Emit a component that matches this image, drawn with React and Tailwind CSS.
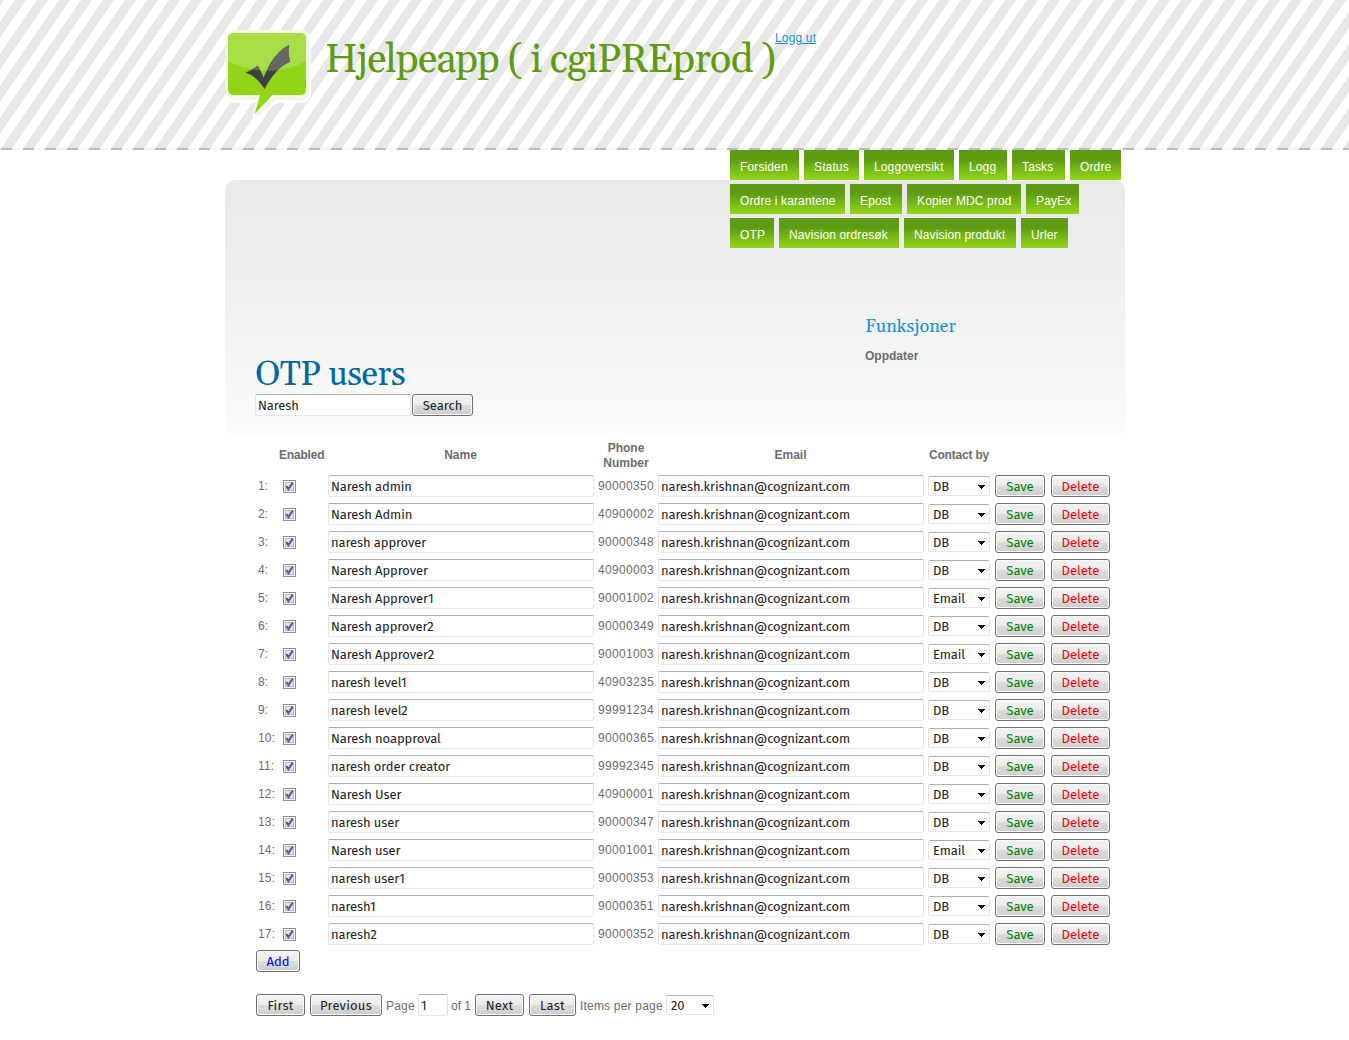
import React from "react";

const NAV = [
  [["Forsiden", "w-[69px]"], ["Status", "w-[55px]"], ["Loggoversikt", "w-[90px]"], ["Logg", "w-[48px]"], ["Tasks", "w-[53px]"], ["Ordre", "w-[51px]"]],
  [["Ordre i karantene", "w-[115px]"], ["Epost", "w-[52px]"], ["Kopier MDC prod", "w-[114px]"], ["PayEx", "w-[53px]"]],
  [["OTP", "w-[44px]"], ["Navision ordresøk", "w-[120px]"], ["Navision produkt", "w-[112px]"], ["Urler", "w-[47px]"]],
];

const EMAIL = "naresh.krishnan@cognizant.com";

const USERS = [
  ["Naresh admin", "90000350", "DB"],
  ["Naresh Admin", "40900002", "DB"],
  ["naresh approver", "90000348", "DB"],
  ["Naresh Approver", "40900003", "DB"],
  ["Naresh Approver1", "90001002", "Email"],
  ["Naresh approver2", "90000349", "DB"],
  ["Naresh Approver2", "90001003", "Email"],
  ["naresh level1", "40903235", "DB"],
  ["naresh level2", "99991234", "DB"],
  ["Naresh noapproval", "90000365", "DB"],
  ["naresh order creator", "99992345", "DB"],
  ["Naresh User", "40900001", "DB"],
  ["naresh user", "90000347", "DB"],
  ["Naresh user", "90001001", "Email"],
  ["naresh user1", "90000353", "DB"],
  ["naresh1", "90000351", "DB"],
  ["naresh2", "90000352", "DB"],
];

const COLS = "grid grid-cols-[21px_49px_270px_60px_270px_67px_56px_59px]";

function Button({ children, className }) {
  return (
    <button
      type="button"
      className={`flex h-[22px] items-center justify-center rounded-[3px] border border-[#707070] bg-[linear-gradient(#f3f3f3,#ebebeb_50%,#dddddd_50%,#cdcdcd)] pt-[2px] font-['Fira_Sans','Noto_Sans',sans-serif] text-[13px] leading-[18px] shadow-[inset_0_0_0_1px_#fafafa] ${className}`}
    >
      {children}
    </button>
  );
}

function Field({ value, className }) {
  return (
    <input
      readOnly
      value={value}
      className={`block h-[22px] rounded-[2px] border border-t-[#abadb3] border-r-[#e2e3ea] border-b-[#e3e9ef] border-l-[#e2e3ea] bg-white px-[2px] font-['Fira_Sans','Noto_Sans',sans-serif] text-[13px] tracking-[-0.1px] text-[#222222] outline-none ${className}`}
    />
  );
}

function Select({ value, className }) {
  return (
    <div
      className={`flex h-[20px] items-center justify-between rounded-[2px] border border-t-[#abadb3] border-r-[#e2e3ea] border-b-[#e3e9ef] border-l-[#e2e3ea] bg-white px-1 font-['Fira_Sans','Noto_Sans',sans-serif] text-[13px] leading-[16px] tracking-[-0.1px] text-[#222222] ${className}`}
    >
      <span className="pt-[2px]">{value}</span>
      <svg width="7" height="4" viewBox="0 0 7 4" shapeRendering="crispEdges" className="mt-px">
        <path d="M0 0h7v1H6v1H5v1H4v1H3V3H2V2H1V1H0z" fill="#000" />
      </svg>
    </div>
  );
}

function Checkbox() {
  return (
    <svg width="13" height="13" viewBox="0 0 13 13">
      <rect x=".5" y=".5" width="12" height="12" fill="#f4f4f4" stroke="#8e8f8f" />
      <rect x="2.5" y="2.5" width="8" height="8" fill="#e1e4e8" stroke="#b5bac2" />
      <path d="M3.4 6 L5.4 9 L9.6 2.8" fill="none" stroke="#4a5f97" strokeWidth="2.1" />
    </svg>
  );
}

function Logo() {
  const check = "M22.300 44.700Q29 42 34.700 37.700Q38 43 40.700 49.500C46 36 54 23 66 17Q64.500 25 67 33.700C57 38 49 47 41.600 61C36 53 31 47 22.300 44.700Z";
  return (
    <svg width="92" height="92" viewBox="0 0 92 92" className="block">
      <defs>
        <clipPath id="bubble">
          <rect x="5" y="5" width="78" height="62" rx="5.500" />
        </clipPath>
        <clipPath id="shine">
          <path d="M0 0H92V30L83 33.500Q44 52 5 33.500L0 30Z" />
        </clipPath>
      </defs>
      <path d="M11 3H80a8 8 0 0 1 8 8V66a9 9 0 0 1-9 9H54L34 89H29L33 75H12a9 9 0 0 1-9-8V11Z" fill="#fff" />
      <path d="M12 3H77a8 8 0 0 1 8 8V62a8 8 0 0 1-8 8H52L31 89L37 70H11a8 8 0 0 1-8-8V11a8 8 0 0 1 8-8Z" fill="#e3e6df" transform="translate(1.2 1.500)" opacity=".55" />
      <path d="M11 2H77.500a8 8 0 0 1 8 8V62a8 8 0 0 1-8 8H52L31 88.500L29.500 86L35.500 70H10.500a8 8 0 0 1-8-8V10a8 8 0 0 1 8-8Z" fill="#f1fde0" />
      <path d="M37.500 66H50.500L31.500 86Z" fill="#92d41a" />
      <g clipPath="url(#bubble)">
        <rect x="5" y="5" width="78" height="62" fill="#92d41a" />
        <path d="M5 5H83V33.500Q44 52 5 33.500Z" fill="#a8dd47" />
      </g>
      <path d={check} fill="#404040" />
      <path clipPath="url(#shine)" d={check} fill="#666666" />
    </svg>
  );
}

export default function App() {
  return (
    <div className="min-h-[1040px] w-full bg-white font-['Liberation_Sans',Arial,sans-serif] text-[12px] text-[#6d6d6d]">
      <header className="flex h-[150px] flex-col bg-[repeating-linear-gradient(124.51deg,#e8e8e8_0px,#e8e8e8_3.2px,#ffffff_3.5px,#ffffff_12.2px,#e8e8e8_12.5px,#e8e8e8_18.129px)]">
        <div className="flex h-[148px] items-start pt-[28px] pl-[223px]">
          <Logo />
          <h1 className="ml-[10px] pt-[9px] font-['Gelasio',Georgia,'Liberation_Serif',serif] text-[40px] leading-[48px] font-normal tracking-[-1px] whitespace-nowrap text-[#5c9b12]">
            Hjelpeapp ( i cgiPREprod )
          </h1>
          <a className="pt-[2px] leading-[16px] tracking-[0.15px] text-[#1490dd] underline">Logg ut</a>
        </div>
        <div className="h-[2px] bg-[repeating-linear-gradient(90deg,#f5f5f5_0px,#f5f5f5_1px,#bcbcbc_1px,#bcbcbc_12px,#f5f5f5_12px,#f5f5f5_22px)]" />
      </header>

      <main className="ml-[225px] w-[900px] pt-[30px]">
        <section className="flow-root h-[256px] rounded-[10px] bg-linear-to-b from-[#e8e8e8] to-[#fbfbfb]">
          <nav className="-mt-[30px] ml-[505px] flex flex-col gap-1">
            {NAV.map((row, i) => (
              <div key={i} className="flex gap-[5px]">
                {row.map(([label, width]) => (
                  <a
                    key={label}
                    className={`h-[30px] bg-[linear-gradient(#5c9b12_0%,#5c9b12_30%,#93d61a_100%)] pt-[2px] pl-[10px] leading-[30px] tracking-[0.13px] whitespace-nowrap text-white ${width}`}
                  >
                    {label}
                  </a>
                ))}
              </div>
            ))}
          </nav>
          <div className="flex pt-[67px]">
            <div className="w-[640px] pt-[40px] pl-[30px]">
              <h2 className="pt-[1px] font-['Gelasio',Georgia,'Liberation_Serif',serif] text-[34px] leading-[38px] font-normal tracking-[-0.5px] text-[#0069a5]">
                OTP users
              </h2>
              <div className="flex gap-[1px]">
                <Field value="Naresh" className="w-[156px]" />
                <Button className="w-[61px] text-[#222222]">Search</Button>
              </div>
            </div>
            <aside>
              <h3 className="font-['Gelasio',Georgia,'Liberation_Serif',serif] text-[18px] leading-[24px] font-normal text-[#1490dd]">
                Funksjoner
              </h3>
              <p className="mt-[10px] leading-[14px] font-bold">Oppdater</p>
            </aside>
          </div>
        </section>

        <section className="pl-[33px]">
          <div className={`${COLS} h-[36px] items-center pt-[3px] text-center leading-[15px] font-bold tracking-[-0.2px]`}>
            <span />
            <span className="text-left">Enabled</span>
            <span className="pr-[5px] tracking-normal">Name</span>
            <span className="pr-[4px] tracking-normal">Phone Number</span>
            <span className="pr-[5px] tracking-normal">Email</span>
            <span className="pl-[1px] text-left whitespace-nowrap">Contact by</span>
          </div>
          {USERS.map(([name, phone, contact], i) => (
            <div key={i} className={`${COLS} h-[28px] items-center`}>
              <span className="tracking-[0.15px]">{i + 1}:</span>
              <span className="pt-[1px] pl-[4px]">
                <Checkbox />
              </span>
              <Field value={name} className="w-[266px]" />
              <span className="tracking-[0.33px]">{phone}</span>
              <Field value={EMAIL} className="w-[266px]" />
              <Select value={contact} className="w-[62px]" />
              <Button className="w-[50px] text-[#008000]">Save</Button>
              <Button className="w-[59px] text-[#ff0000]">Delete</Button>
            </div>
          ))}
        </section>

        <section className="pt-[2px] pl-[31px]">
          <Button className="w-[44px] text-[#0000ff]">Add</Button>
          <div className="mt-[22px] flex items-center tracking-[0.2px]">
            <Button className="w-[49px] text-[#222222]">First</Button>
            <Button className="ml-[5px] w-[72px] text-[#222222]">Previous</Button>
            <span className="ml-1 w-[32px] pt-[1px]">Page</span>
            <Field value="1" className="w-[30px]" />
            <span className="ml-[3px] w-[24px] pt-[1px] tracking-normal whitespace-nowrap">of 1</span>
            <Button className="w-[49px] text-[#222222]">Next</Button>
            <Button className="ml-[5px] w-[47px] text-[#222222]">Last</Button>
            <span className="ml-1 w-[86px] pt-[1px] whitespace-nowrap">Items per page</span>
            <Select value="20" className="w-[48px]" />
          </div>
        </section>
      </main>
    </div>
  );
}
